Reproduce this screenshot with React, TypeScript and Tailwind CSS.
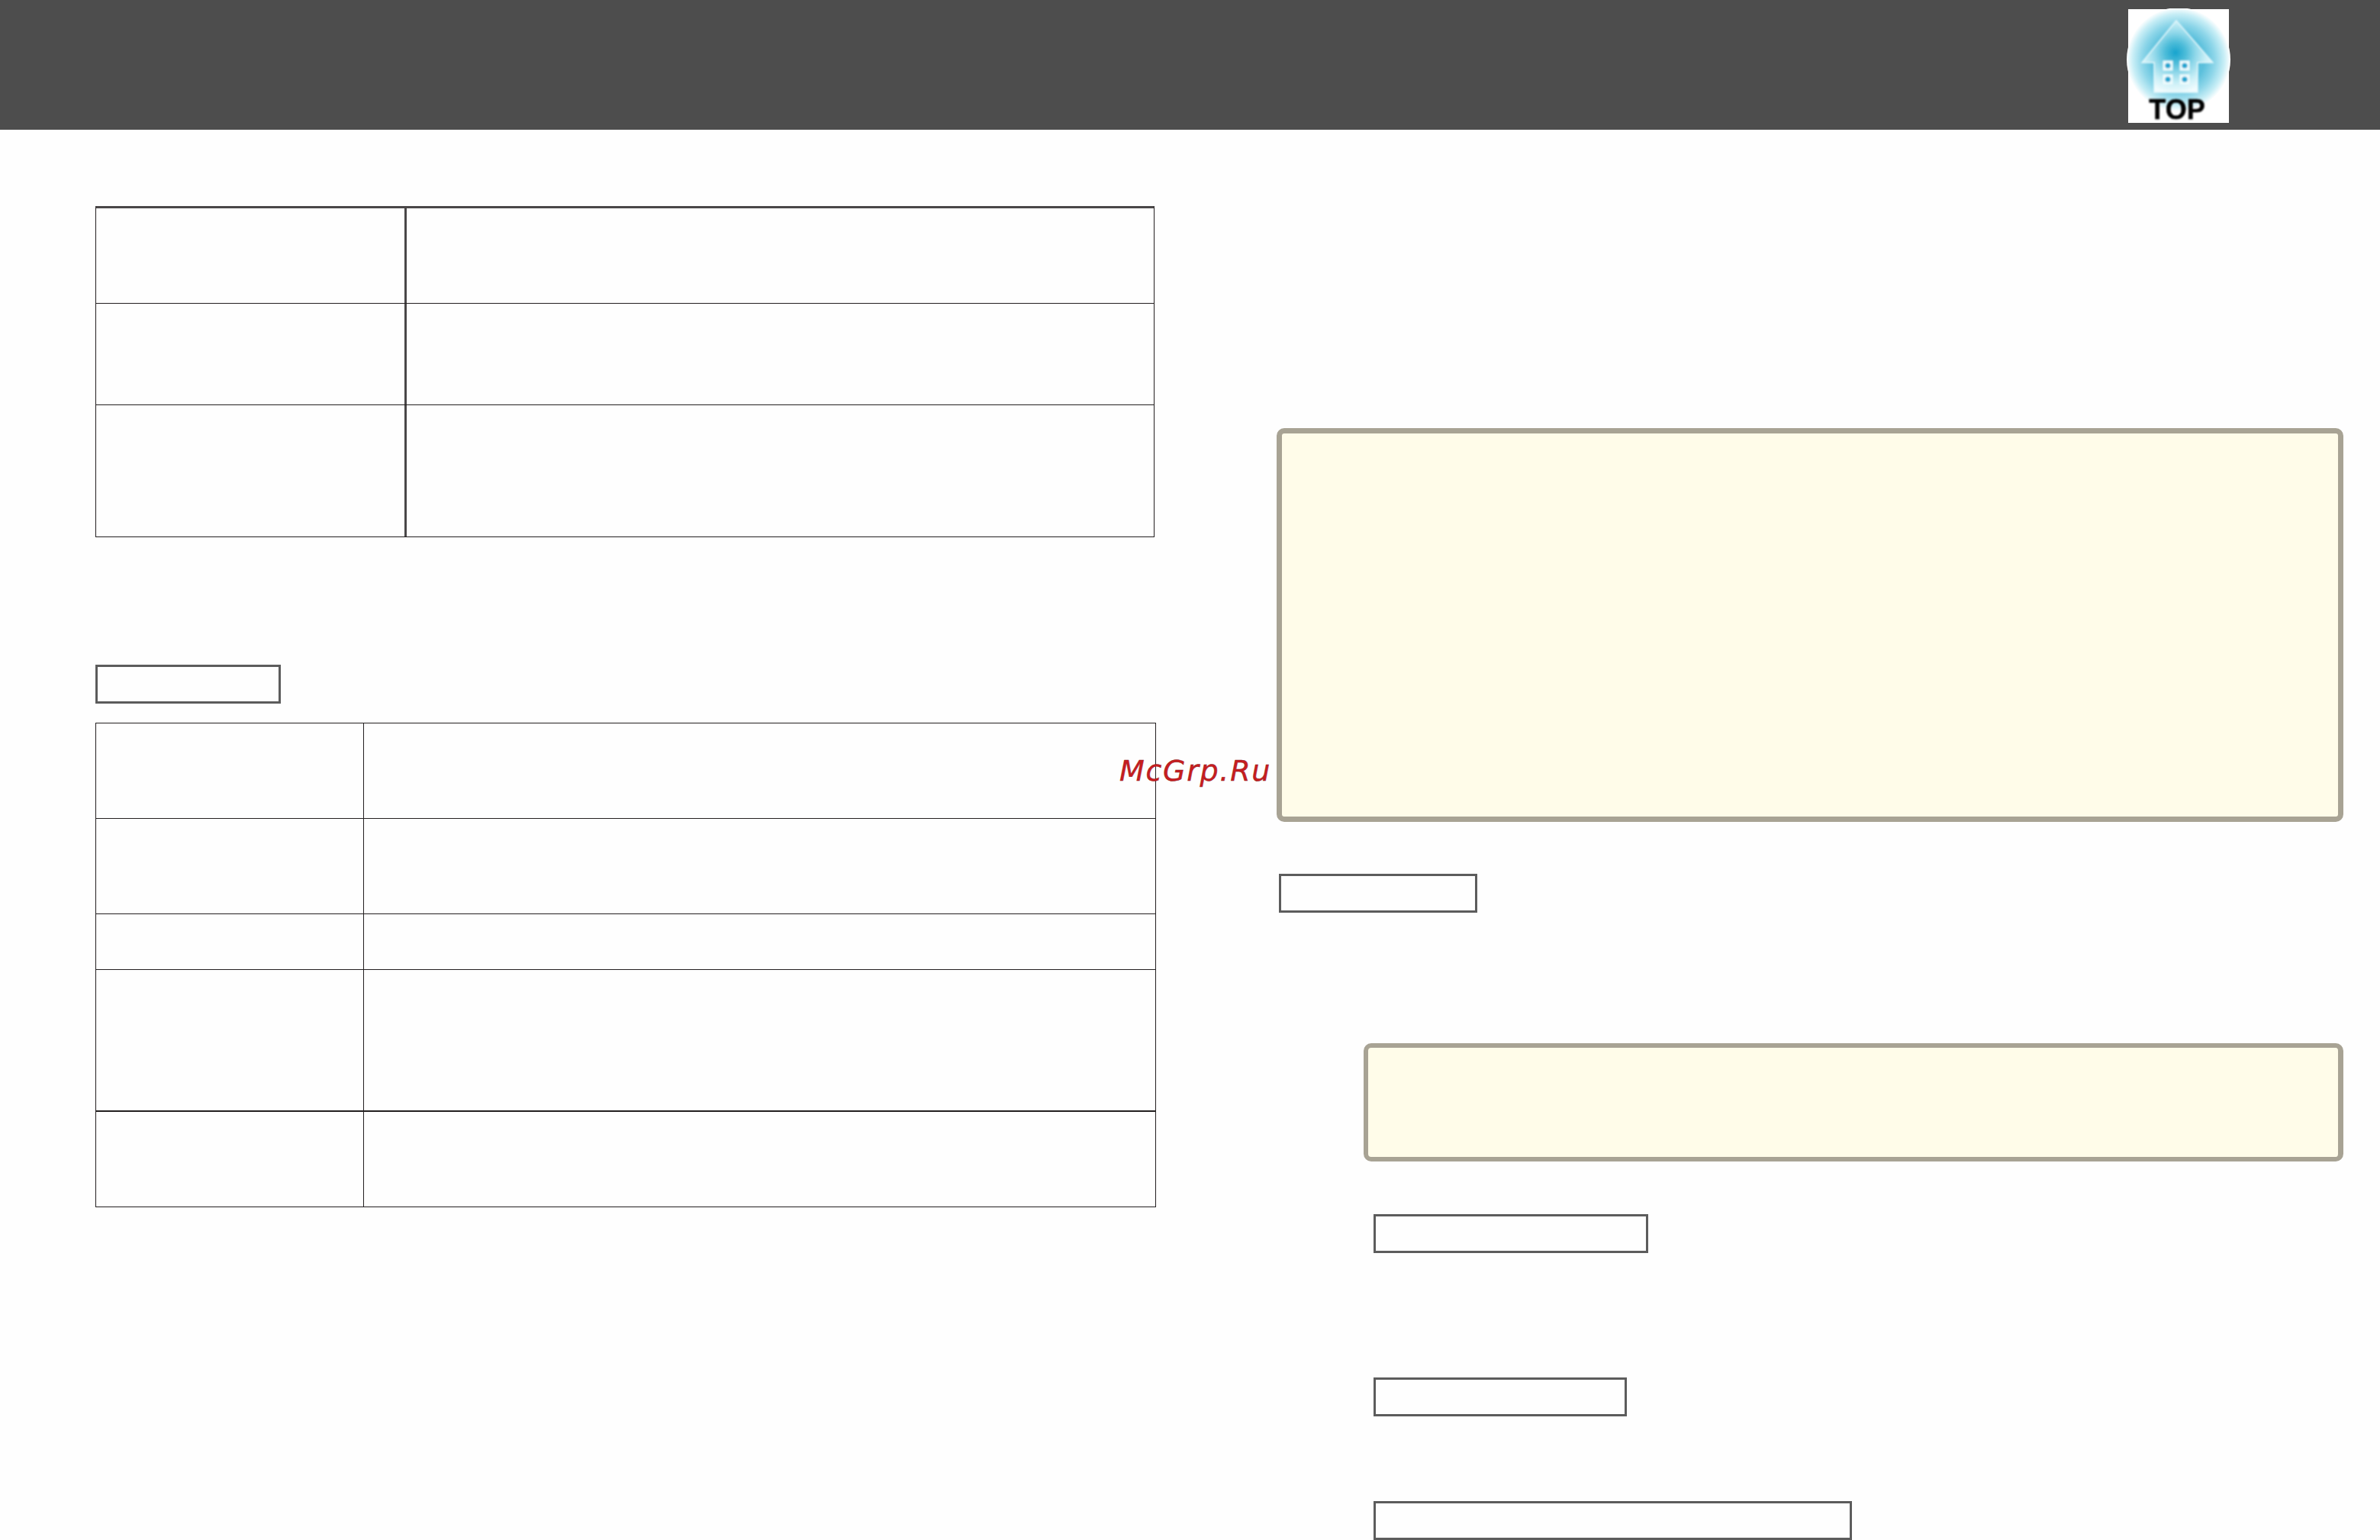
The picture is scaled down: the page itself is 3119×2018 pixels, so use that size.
// Manual page: header bar, spec tables on the left, note boxes on the right

// Rows of the first table
const topTableRows = [
  { left: 'w-[407px] border-r-[3px] border-[#4a4748]', height: 'h-[125px] border-b' },
  { left: 'w-[407px] border-r-[3px] border-[#4a4748]', height: 'h-[133px] border-b' },
  { left: 'w-[407px] border-r-[3px] border-[#4a4748]', height: 'h-[173px] border-b' },
];

// Rows of the second table
const bottomTableRows = [
  { left: 'w-[351px] border-r border-[#231f20]', height: 'h-[125px] border-b' },
  { left: 'w-[351px] border-r border-[#231f20]', height: 'h-[125px] border-b' },
  { left: 'w-[351px] border-r border-[#231f20]', height: 'h-[73px] border-b' },
  { left: 'w-[351px] border-r border-[#231f20]', height: 'h-[186px] border-b-2' },
  { left: 'w-[351px] border-r border-[#231f20]', height: 'h-[125px] border-b' },
];

function SpecRows({ rows }: { rows: { left: string; height: string }[] }) {
  return (
    <>
      {rows.map((row, i) => (
        <div key={i} className={`flex border-[#231f20] ${row.height}`}>
          <div className={row.left} />
          <div className="flex-1" />
        </div>
      ))}
    </>
  );
}

function TopLogo() {
  return (
    <svg width="136" height="156" viewBox="0 0 136 156">
      <defs>
        <radialGradient id="glow" cx="0.5" cy="0.5" r="0.5">
          <stop offset="0%" stopColor="#45b6d7" />
          <stop offset="50%" stopColor="#5cc0dc" />
          <stop offset="70%" stopColor="#8ed6e9" />
          <stop offset="88%" stopColor="#c8eef6" />
          <stop offset="100%" stopColor="#ffffff" />
        </radialGradient>
        <radialGradient id="house" gradientUnits="userSpaceOnUse" cx="64" cy="58" r="54">
          <stop offset="0%" stopColor="#18a3cd" />
          <stop offset="25%" stopColor="#4dbcd9" />
          <stop offset="50%" stopColor="#93d9ea" />
          <stop offset="75%" stopColor="#ccf0f7" />
          <stop offset="100%" stopColor="#f2fcfe" />
        </radialGradient>
        <filter id="soft">
          <feGaussianBlur stdDeviation="0.8" />
        </filter>
      </defs>
      <rect x="2" y="1" width="132" height="149" fill="#ffffff" />
      <circle cx="68" cy="67" r="68" fill="url(#glow)" />
      <g filter="url(#soft)">
        <path
          d="M65 16 L113 71 L93 71 L93 110 L36 110 L36 71 L20 71 Z"
          fill="url(#house)"
          stroke="#e4f8fc"
          strokeWidth="1.5"
        />
        {[
          [54, 75],
          [76, 75],
          [54, 93],
          [76, 93],
        ].map(([x, y]) => (
          <g key={`${x}-${y}`}>
            <rect x={x - 6.5} y={y - 6.5} width="13" height="13" fill="#eefbfd" />
            <circle cx={x} cy={y} r="3.6" fill="#22a6d0" />
          </g>
        ))}
        <text
          x="66"
          y="145"
          textAnchor="middle"
          fontSize="36"
          fontWeight="700"
          fontFamily="'Liberation Sans', Arial, sans-serif"
          fill="#000000"
          stroke="#000000"
          strokeWidth="0.5"
        >
          TOP
        </text>
      </g>
    </svg>
  );
}

export default function App() {
  return (
    <div className="relative w-[3119px] h-[2018px] overflow-hidden bg-[#fefefe] font-['Liberation_Sans',Arial,sans-serif]">
      {/* Header */}
      <header className="flex justify-end h-[170px] pt-[11px] pr-[196px] bg-[#4d4d4d]">
        <TopLogo />
      </header>

      <div className="flex">
        {/* Left column */}
        <section className="w-[1673px] pt-[100px] pl-[125px]">
          <div className="w-[1388px] border-x border-t-[3px] border-x-[#231f20] border-t-[#4a4748]">
            <SpecRows rows={topTableRows} />
          </div>

          <div className="w-[243px] h-[51px] mt-[167px] border-[3px] border-[#5c5c5c]" />

          <div className="w-[1390px] mt-[25px] border-x border-t border-[#231f20]">
            <SpecRows rows={bottomTableRows} />
          </div>
        </section>

        {/* Right column */}
        <section className="flex-1 pt-[391px] pr-[48px]">
          <div className="h-[516px] rounded-[10px] border-[7px] border-[#a8a394] bg-[#fffce9]" />

          <div className="w-[260px] h-[51px] mt-[68px] ml-[3px] border-[3px] border-[#5c5c5c]" />

          <div className="h-[155px] mt-[171px] ml-[114px] rounded-[10px] border-[6px] border-r-[7px] border-[#a8a394] bg-[#fffce9]" />

          <div className="w-[360px] h-[51px] mt-[69px] ml-[127px] border-[3px] border-[#5c5c5c]" />
          <div className="w-[332px] h-[51px] mt-[163px] ml-[127px] border-[3px] border-[#5c5c5c]" />
          <div className="w-[627px] h-[51px] mt-[111px] ml-[127px] border-[3px] border-[#5c5c5c]" />
        </section>
      </div>

      {/* Watermark over the page */}
      <span className="absolute left-[1467px] top-[991px] text-[38px] leading-none italic tracking-[1.7px] text-[#c81d20] [-webkit-text-stroke:0.4px_#8a1418] font-['DejaVu_Sans',sans-serif]">
        McGrp.Ru
      </span>
    </div>
  );
}
